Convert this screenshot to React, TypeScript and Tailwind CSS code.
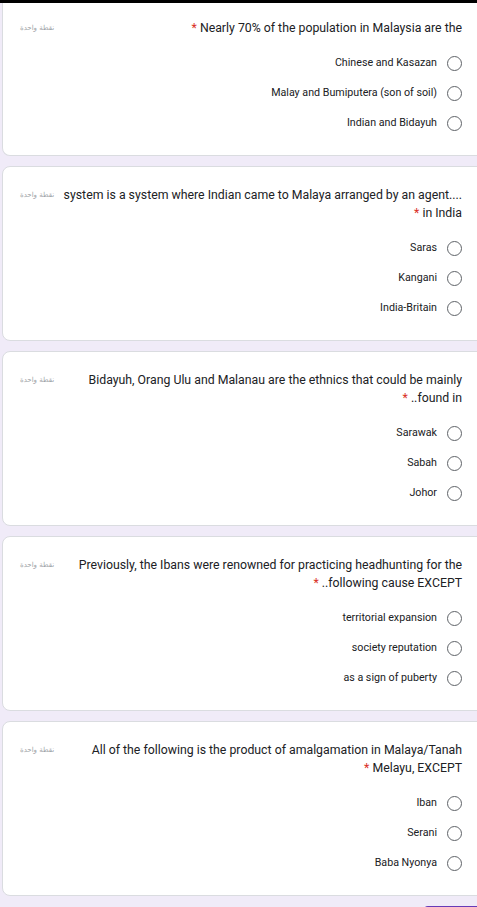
import React from 'react';

type Question = {
  lines: string[];
  options: string[];
};

const questions: Question[] = [
  {
    lines: ['Nearly 70% of the population in Malaysia are the'],
    options: ['Chinese and Kasazan', 'Malay and Bumiputera (son of soil)', 'Indian and Bidayuh'],
  },
  {
    lines: ['system is a system where Indian came to Malaya arranged by an agent....\u200E', 'in India'],
    options: ['Saras', 'Kangani', 'India-Britain'],
  },
  {
    lines: ['Bidayuh, Orang Ulu and Malanau are the ethnics that could be mainly', 'found in..'],
    options: ['Sarawak', 'Sabah', 'Johor'],
  },
  {
    lines: ['Previously, the Ibans were renowned for practicing headhunting for the', 'following cause EXCEPT..'],
    options: ['territorial expansion', 'society reputation', 'as a sign of puberty'],
  },
  {
    lines: ['All of the following is the product of amalgamation in Malaya/Tanah', 'Melayu, EXCEPT'],
    options: ['Iban', 'Serani', 'Baba Nyonya'],
  },
];

function QuestionCard({ q, first }: { q: Question; first?: boolean }) {
  return (
    <div
      className={
        'ml-[2px] w-[490px] bg-white border border-[#dadce0] rounded-lg pl-[17px] pr-[29px] pb-[17px] ' +
        (first ? 'border-t-0 rounded-t-none pt-[16px]' : 'pt-[19px]')
      }
    >
      <div className="flex items-start">
        <div className="w-[40px] h-[18px] flex items-center shrink-0">
          <span dir="rtl" className="font-['DejaVu_Sans'] text-[7px] text-[#a0a4a8] leading-none">
            نقطة واحدة
          </span>
        </div>
        <div
          dir="rtl"
          className="flex-1 text-right text-[12.3px] leading-[18px] text-[#202124] font-['Roboto',sans-serif]"
        >
          {q.lines.map((l, i) => (
            <div key={i} className="whitespace-nowrap">
              {l}
              {i === q.lines.length - 1 && (
                <>
                  {' '}
                  <span className="text-[#d93025]">*</span>
                </>
              )}
            </div>
          ))}
        </div>
      </div>
      <div className="mt-[11px] flex flex-col">
        {q.options.map((o) => (
          <div key={o} className="h-[30px] flex items-center justify-end gap-[10px]">
            <span className="text-[10.7px] text-[#202124] font-['Roboto',sans-serif]">{o}</span>
            <span className="w-[15px] h-[15px] rounded-full border-[1.5px] border-[#5f6368] shrink-0" />
          </div>
        ))}
      </div>
    </div>
  );
}

export default function App() {
  return (
    <div className="w-[477px] min-h-[907px] bg-[#f0ebf8] overflow-hidden">
      <div className="h-[3px] bg-black" />
      <div className="flex flex-col gap-[10px]">
        {questions.map((q, i) => (
          <QuestionCard key={i} q={q} first={i === 0} />
        ))}
        <div className="flex justify-end">
          <div className="w-[53px] h-[36px] bg-[#673ab7] rounded-l" />
        </div>
      </div>
    </div>
  );
}
